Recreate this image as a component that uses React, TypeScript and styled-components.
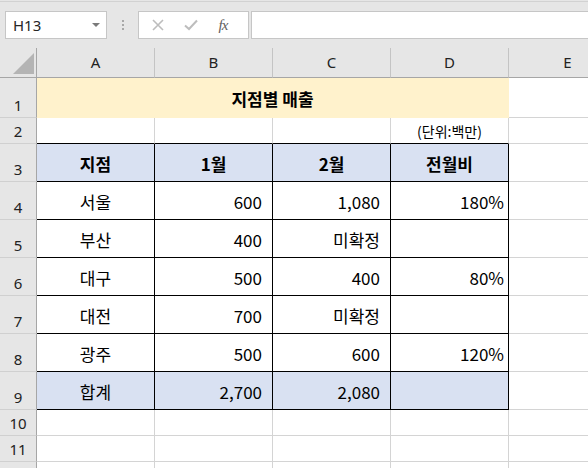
import React from "react";
import styled, { createGlobalStyle } from "styled-components";

const GlobalStyle = createGlobalStyle`
  html, body { margin: 0; padding: 0; background: #f3f3f3; }
  body { overflow: hidden; }
`;

const Window = styled.div`
  width: 588px;
  height: 468px;
  overflow: hidden;
  background: #e6e6e6;
  font-family: "Noto Sans", "Noto Sans CJK KR", sans-serif;
`;

const Toolbar = styled.div`
  margin-top: 1px;
  height: 47px;
  box-sizing: border-box;
  border-top: 1px solid #d2d2d2;
  display: flex;
  align-items: flex-start;
  padding-top: 9px;
  padding-left: 5px;
`;

const NameBox = styled.div`
  width: 102px;
  height: 28px;
  box-sizing: border-box;
  border: 1px solid #c6c6c6;
  background: #fff;
  display: flex;
  align-items: center;
  justify-content: space-between;
  padding: 0 6px 0 7px;
  font-size: 15px;
  color: #262626;
`;

const Caret = styled.span`
  width: 0;
  height: 0;
  border-left: 4px solid transparent;
  border-right: 4px solid transparent;
  border-top: 4px solid #7a7a7a;
`;

const Grip = styled.div`
  width: 31px;
  height: 28px;
  display: flex;
  flex-direction: column;
  align-items: center;
  justify-content: center;
  gap: 2px;
`;

const GripDot = styled.span`
  width: 2px;
  height: 2px;
  background: #a8a8a8;
`;

const ButtonGroup = styled.div`
  width: 111px;
  height: 28px;
  box-sizing: border-box;
  border: 1px solid #c6c6c6;
  background: #fff;
  display: flex;
  align-items: center;
  padding-left: 12px;
  gap: 19px;
`;

const IconSlot = styled.span`
  width: 14px;
  height: 14px;
  display: flex;
  align-items: center;
  justify-content: center;
`;

const Fx = styled.span`
  font-family: "Liberation Serif", serif;
  font-style: italic;
  font-size: 15px;
  color: #5e5e5e;
  letter-spacing: -1px;
  margin-left: -2px;
`;

const FormulaInput = styled.div`
  flex: 1;
  height: 28px;
  margin-left: 2px;
  box-sizing: border-box;
  border: 1px solid #c6c6c6;
  border-right: none;
  background: #fff;
`;

const Sheet = styled.div`
  display: grid;
  grid-template-columns: 37px repeat(5, 118px);
  grid-template-rows: 30px 40px 26px repeat(7, 38px) 26px 26px 26px;
  width: 627px;
  background: #fff;
`;

const Corner = styled.div`
  box-sizing: border-box;
  background: #e6e6e6;
  border-right: 1px solid #a6a6a6;
  border-bottom: 1px solid #a6a6a6;
  display: flex;
  align-items: flex-end;
  justify-content: flex-end;
  padding: 0 2px 3px 0;
`;

const ColHead = styled.div`
  box-sizing: border-box;
  background: #e6e6e6;
  border-bottom: 1px solid #a6a6a6;
  border-right: 1px solid #c4c4c4;
  display: flex;
  align-items: center;
  justify-content: center;
  font-size: 15px;
  color: #222;
  padding-bottom: 1px;
`;

const RowHead = styled.div`
  box-sizing: border-box;
  background: #e6e6e6;
  border-right: 1px solid #a6a6a6;
  border-bottom: 1px solid #d0d0d0;
  display: flex;
  align-items: flex-end;
  justify-content: center;
  font-size: 15px;
  line-height: 18px;
  color: #222;
  padding-bottom: 3px;
`;

type CellProps = {
  $bg?: string;
  $right?: string;
  $bottom?: string;
  $align?: "left" | "center" | "right";
  $bold?: boolean;
  $size?: number;
  $pad?: number;
  $span?: number;
};

const Cell = styled.div<CellProps>`
  box-sizing: border-box;
  grid-column: span ${(p) => p.$span ?? 1};
  background: ${(p) => p.$bg ?? "#fff"};
  border-right: 1px solid ${(p) => p.$right ?? "#d4d4d4"};
  border-bottom: 1px solid ${(p) => p.$bottom ?? "#d4d4d4"};
  display: flex;
  align-items: center;
  justify-content: ${(p) =>
    p.$align === "right" ? "flex-end" : p.$align === "left" ? "flex-start" : "center"};
  padding-right: ${(p) => p.$pad ?? 0}px;
  padding-top: 1px;
  font-family: "Noto Sans CJK KR", sans-serif;
  font-size: ${(p) => p.$size ?? 17}px;
  font-weight: ${(p) => (p.$bold ? 700 : 400)};
  color: #000;
  white-space: nowrap;
`;

const TITLE = "#fff2cc";
const HEAD = "#d9e1f2";
const BLACK = "#000";
const GRID = "#d4d4d4";

const cols = ["A", "B", "C", "D", "E"];

const rows: { name: string; b: string; c: string; d: string; fill?: boolean }[] = [
  { name: "서울", b: "600", c: "1,080", d: "180%" },
  { name: "부산", b: "400", c: "미확정", d: "" },
  { name: "대구", b: "500", c: "400", d: "80%" },
  { name: "대전", b: "700", c: "미확정", d: "" },
  { name: "광주", b: "500", c: "600", d: "120%" },
  { name: "합계", b: "2,700", c: "2,080", d: "", fill: true },
];

const XIcon = () => (
  <svg width="12" height="12" viewBox="0 0 12 12">
    <path d="M1 1 L11 11 M11 1 L1 11" stroke="#bdbdbd" strokeWidth="1.6" fill="none" />
  </svg>
);

const CheckIcon = () => (
  <svg width="14" height="12" viewBox="0 0 14 12">
    <path d="M1 6.5 L5 10 L13 1.5" stroke="#bdbdbd" strokeWidth="2" fill="none" />
  </svg>
);

const CornerTriangle = () => (
  <svg width="21" height="21" viewBox="0 0 21 21">
    <polygon points="21,0 21,21 0,21" fill="#b4b4b4" />
  </svg>
);

export default function App() {
  return (
    <Window>
      <GlobalStyle />
      <Toolbar>
        <NameBox>
          <span>H13</span>
          <Caret />
        </NameBox>
        <Grip>
          <GripDot />
          <GripDot />
          <GripDot />
        </Grip>
        <ButtonGroup>
          <IconSlot>
            <XIcon />
          </IconSlot>
          <IconSlot>
            <CheckIcon />
          </IconSlot>
          <IconSlot>
            <Fx>fx</Fx>
          </IconSlot>
        </ButtonGroup>
        <FormulaInput />
      </Toolbar>
      <Sheet>
        <Corner>
          <CornerTriangle />
        </Corner>
        {cols.map((c) => (
          <ColHead key={c}>{c}</ColHead>
        ))}

        <RowHead>1</RowHead>
        <Cell $span={4} $bg={TITLE} $right={TITLE} $bottom={TITLE} $bold>
          지점별 매출
        </Cell>
        <Cell />

        <RowHead>2</RowHead>
        <Cell $bottom={BLACK} />
        <Cell $bottom={BLACK} />
        <Cell $bottom={BLACK} />
        <Cell $bottom={BLACK} $size={14}>
          (단위:백만)
        </Cell>
        <Cell />

        <RowHead>3</RowHead>
        {["지점", "1월", "2월", "전월비"].map((h) => (
          <Cell key={h} $bg={HEAD} $right={BLACK} $bottom={BLACK} $bold>
            {h}
          </Cell>
        ))}
        <Cell />

        {rows.map((r, i) => {
          const bg = r.fill ? HEAD : "#fff";
          return (
            <React.Fragment key={r.name}>
              <RowHead>{i + 4}</RowHead>
              <Cell $bg={bg} $right={BLACK} $bottom={BLACK}>
                {r.name}
              </Cell>
              <Cell $bg={bg} $right={BLACK} $bottom={BLACK} $align="right" $pad={10}>
                {r.b}
              </Cell>
              <Cell $bg={bg} $right={BLACK} $bottom={BLACK} $align="right" $pad={10}>
                {r.c}
              </Cell>
              <Cell $bg={bg} $right={BLACK} $bottom={BLACK} $align="right" $pad={4}>
                {r.d}
              </Cell>
              <Cell $bottom={GRID} />
            </React.Fragment>
          );
        })}

        {[10, 11].map((n) => (
          <React.Fragment key={n}>
            <RowHead>{n}</RowHead>
            <Cell />
            <Cell />
            <Cell />
            <Cell />
            <Cell />
          </React.Fragment>
        ))}
        <RowHead />
        <Cell />
        <Cell />
        <Cell />
        <Cell />
        <Cell />
      </Sheet>
    </Window>
  );
}
